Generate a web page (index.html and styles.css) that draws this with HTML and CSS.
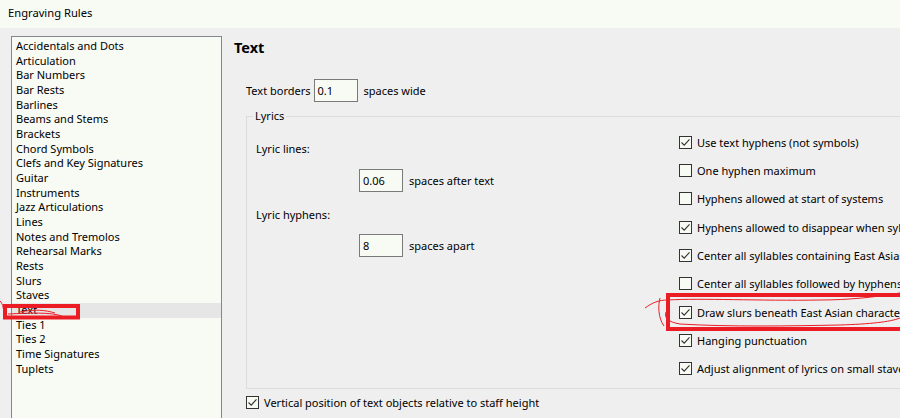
FILE: index.html
```html
<!DOCTYPE html>
<html>
<head>
<meta charset="utf-8">
<link rel="stylesheet" href="styles.css">
</head>
<body>
<div class="titlebar">Engraving Rules</div>
<div class="main">
  <ul class="list">
    <li>Accidentals and Dots</li>
    <li>Articulation</li>
    <li>Bar Numbers</li>
    <li>Bar Rests</li>
    <li>Barlines</li>
    <li>Beams and Stems</li>
    <li>Brackets</li>
    <li>Chord Symbols</li>
    <li>Clefs and Key Signatures</li>
    <li>Guitar</li>
    <li>Instruments</li>
    <li>Jazz Articulations</li>
    <li>Lines</li>
    <li>Notes and Tremolos</li>
    <li>Rehearsal Marks</li>
    <li>Rests</li>
    <li>Slurs</li>
    <li>Staves</li>
    <li class="selected">Text</li>
    <li>Ties 1</li>
    <li>Ties 2</li>
    <li>Time Signatures</li>
    <li>Tuplets</li>
  </ul>
  <div class="panel">
    <h1 class="heading">Text</h1>
    <div class="field-row borders">
      <span class="tight">Text borders</span>
      <span class="input">0.1</span>
      <span>spaces wide</span>
    </div>
    <fieldset class="group">
      <legend>Lyrics</legend>
      <div class="group-body">
        <div class="left-col">
          <div class="label first">Lyric lines:</div>
          <div class="field-row indent"><span class="input">0.06</span><span>spaces after text</span></div>
          <div class="label second">Lyric hyphens:</div>
          <div class="field-row indent"><span class="input">8</span><span>spaces apart</span></div>
        </div>
        <div class="right-col">
          <div class="check"><span class="box on"><svg viewBox="0 0 13 13"><path d="M2.5 6.5 L5.2 9.2 L10.5 3.3"/></svg></span>Use text hyphens (not symbols)</div>
          <div class="check"><span class="box"></span>One hyphen maximum</div>
          <div class="check"><span class="box"></span>Hyphens allowed at start of systems</div>
          <div class="check"><span class="box on"><svg viewBox="0 0 13 13"><path d="M2.5 6.5 L5.2 9.2 L10.5 3.3"/></svg></span>Hyphens allowed to disappear when syllables are close</div>
          <div class="check"><span class="box on"><svg viewBox="0 0 13 13"><path d="M2.5 6.5 L5.2 9.2 L10.5 3.3"/></svg></span>Center all syllables containing East Asian characters</div>
          <div class="check"><span class="box"></span>Center all syllables followed by hyphens</div>
          <div class="check"><span class="box on"><svg viewBox="0 0 13 13"><path d="M2.5 6.5 L5.2 9.2 L10.5 3.3"/></svg></span>Draw slurs beneath East Asian characters</div>
          <div class="check"><span class="box on"><svg viewBox="0 0 13 13"><path d="M2.5 6.5 L5.2 9.2 L10.5 3.3"/></svg></span>Hanging punctuation</div>
          <div class="check"><span class="box on"><svg viewBox="0 0 13 13"><path d="M2.5 6.5 L5.2 9.2 L10.5 3.3"/></svg></span>Adjust alignment of lyrics on small staves</div>
        </div>
      </div>
    </fieldset>
    <div class="check bottom"><span class="box on"><svg viewBox="0 0 13 13"><path d="M2.5 6.5 L5.2 9.2 L10.5 3.3"/></svg></span>Vertical position of text objects relative to staff height</div>
  </div>
</div>
<svg class="marks" width="900" height="418" viewBox="0 0 900 418">
  <rect x="5" y="306" width="73" height="11.5" class="thick"/>
  <path class="thin" d="M0 301 C3 304 4 310 4 317 M8 314 C30 313 50 312 62 316 M20 312 C35 309 45 310 55 313"/>
  <rect x="668" y="295" width="260" height="34" class="thick"/>
  <path class="thin" d="M645 308 C652 303 658 300 668 300 C700 298 760 301 820 300 C850 300 875 297 900 293 M666 312 C664 318 668 322 680 324 C730 327 790 326 840 325 C870 324 890 322 900 318 M660 298 C658 305 658 318 664 326"/>
</svg>
</body>
</html>
```
FILE: styles.css
```css
html, body {
  margin: 0;
  padding: 0;
}
body {
  width: 900px;
  height: 418px;
  overflow: hidden;
  background: #efeff0;
  font-family: "Noto Sans", "Open Sans", sans-serif;
  font-size: 11px;
  color: #000;
  position: relative;
}
.titlebar {
  height: 28px;
  line-height: 26px;
  background: #f8faf4;
  padding-left: 8px;
  font-size: 11.2px;
}
.main {
  display: flex;
  padding-top: 8px;
  align-items: flex-start;
  height: 382px;
  overflow: hidden;
}
.list {
  list-style: none;
  margin: 0 0 0 11px;
  padding: 2px 0 0 0;
  width: 209px;
  height: 400px;
  border: 1px solid #828790;
  background: #f8faf4;
  flex: none;
}
.list li {
  height: 14.68px;
  line-height: 14.68px;
  padding-left: 4px;
  white-space: nowrap;
}
.list li.selected {
  background: #e6e6e6;
}
.panel {
  padding-left: 12px;
  flex: none;
  width: 666px;
  overflow: hidden;
}
.heading {
  margin: 1px 0 0 0;
  font-size: 14.5px;
  font-weight: bold;
  line-height: 20px;
  height: 20px;
}
.field-row {
  display: flex;
  align-items: center;
  gap: 6px;
  white-space: nowrap;
}
.borders {
  margin: 22px 0 0 12px;
}
.tight {
  margin-right: -3px;
}
.input {
  display: inline-block;
  box-sizing: border-box;
  width: 44px;
  height: 23px;
  line-height: 21px;
  border: 1px solid #7a7a7a;
  background: #f8faf4;
  padding-left: 3px;
}
.group {
  margin: 6px 0 0 12px;
  padding: 0;
  border: 1px solid #dcdcdc;
  width: 700px;
  box-sizing: border-box;
  min-width: 0;
}
.group legend {
  margin-left: 6px;
  padding: 0 2px;
  line-height: 16px;
  height: 16px;
}
.group-body {
  display: flex;
  height: 264px;
}
.left-col {
  width: 432px;
  flex: none;
  padding-left: 9px;
  box-sizing: border-box;
}
.label {
  line-height: 16px;
  height: 16px;
}
.label.first {
  margin-top: 17px;
}
.label.second {
  margin-top: 15px;
}
.indent {
  margin-left: 103px;
  margin-top: 12px;
}
.label.second + .indent {
  margin-top: 11px;
}
.right-col {
  padding-top: 4px;
  flex: none;
}
.check {
  display: flex;
  align-items: center;
  height: 28.33px;
  white-space: nowrap;
}
.box {
  box-sizing: border-box;
  width: 13px;
  height: 13px;
  border: 1px solid #333;
  background: #f8faf4;
  margin-right: 5px;
  flex: none;
  position: relative;
}
.box svg {
  position: absolute;
  left: -1px;
  top: -1px;
  width: 13px;
  height: 13px;
  fill: none;
  stroke: #333;
  stroke-width: 1.1;
}
.check.bottom {
  margin: 5px 0 0 12px;
  height: 16px;
}
.marks {
  position: absolute;
  left: 0;
  top: 0;
  pointer-events: none;
}
.marks .thick {
  fill: none;
  stroke: #ec1c24;
  stroke-width: 4;
}
.marks .thin {
  fill: none;
  stroke: #ec1c24;
  stroke-width: 1;
}
```
